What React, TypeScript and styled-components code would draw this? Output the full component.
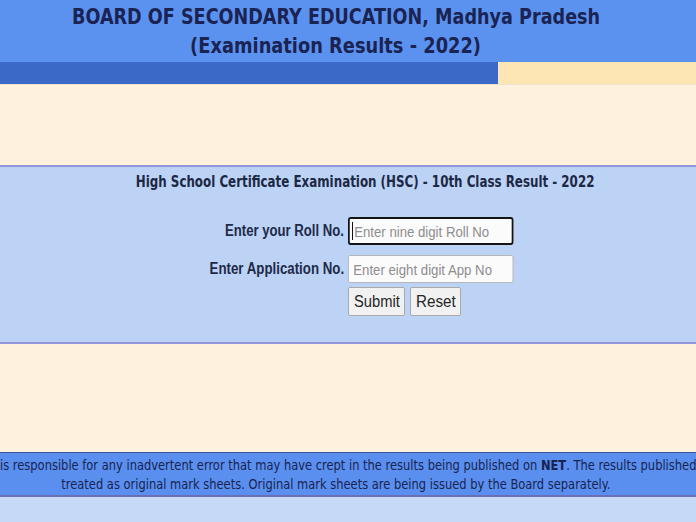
import React from "react";
import styled, { createGlobalStyle } from "styled-components";

const GlobalStyle = createGlobalStyle`
  html, body {
    margin: 0;
    padding: 0;
    background: #c6daf7;
  }
  * {
    box-sizing: border-box;
  }
`;

const Page = styled.div`
  width: 696px;
  height: 522px;
  overflow: hidden;
  display: flex;
  flex-direction: column;
  background: #c6daf7;
`;

// text on the page is squeezed sideways, as in the screenshot
const Squeeze = styled.span<{ $sx: number; $origin?: string }>`
  display: inline-block;
  white-space: nowrap;
  transform: scaleX(${(p) => p.$sx});
  transform-origin: ${(p) => p.$origin || "center"} center;
`;

const Header = styled.header`
  height: 62px;
  background: #5b92f0;
  padding-top: 2px;
  flex-shrink: 0;
  overflow: hidden;
`;

const HeaderTitle = styled.div`
  width: 672px;
  display: flex;
  flex-direction: column;
  align-items: center;
  font-family: "DejaVu Sans", Verdana, sans-serif;
  font-weight: bold;
  font-size: 22px;
  line-height: 29px;
  color: #1a2352;
`;

const Strip = styled.div`
  height: 23px;
  flex-shrink: 0;
  display: grid;
  grid-template-columns: 498px 1fr;
  border-bottom: 1px solid #f3e2c8;
`;

const StripPart = styled.div<{ $tone: string }>`
  background: ${(p) => p.$tone};
`;

const CreamBand = styled.div<{ $h: number }>`
  height: ${(p) => p.$h}px;
  background: #fef1dd;
  flex-shrink: 0;
`;

const Rule = styled.div`
  height: 2px;
  background: #9297dc;
  flex-shrink: 0;
`;

const FormSection = styled.section`
  height: 175px;
  background: #bcd3f6;
  padding-top: 5px;
  flex-shrink: 0;
`;

const SectionTitle = styled.h2`
  margin: 0;
  padding-left: 34px;
  display: flex;
  justify-content: center;
  font-family: "DejaVu Sans", Verdana, sans-serif;
  font-weight: bold;
  font-size: 16px;
  line-height: 20px;
  color: #1c2844;
`;

const FormGrid = styled.form`
  margin-top: 25px;
  display: grid;
  grid-template-columns: 344px 1fr;
  column-gap: 4px;
  row-gap: 4px;
  align-items: start;
`;

const Label = styled.label<{ $below?: number }>`
  text-align: right;
  margin-bottom: ${(p) => p.$below || 0}px;
  font-family: "Liberation Sans", Arial, sans-serif;
  font-weight: bold;
  font-size: 16px;
  line-height: 28px;
  color: #1e2a48;
`;

const InputWrap = styled.div<{ $below?: number }>`
  position: relative;
  height: 28px;
  margin-bottom: ${(p) => p.$below || 0}px;
`;

const TextInput = styled.input<{ $focused?: boolean }>`
  width: 188px;
  height: 28px;
  padding: 0 5px;
  transform: scaleX(0.88);
  transform-origin: left center;
  background: #fbfbfb;
  border: ${(p) => (p.$focused ? "2px solid #141414" : "1px solid #b3b3b3")};
  border-radius: ${(p) => (p.$focused ? "3px" : "2px")};
  font-family: "Liberation Sans", Arial, sans-serif;
  font-size: 15px;
  color: #222;
  outline: none;

  &::placeholder {
    color: #8d8d8d;
  }
`;

const Caret = styled.span`
  position: absolute;
  left: 4px;
  top: 5px;
  width: 1px;
  height: 18px;
  background: #111;
`;

const Buttons = styled.div`
  grid-column: 2;
  display: flex;
  gap: 5px;
`;

const Button = styled.button<{ $w: number }>`
  width: ${(p) => p.$w}px;
  height: 29px;
  padding: 0;
  background: #f1f1f1;
  border: 1px solid #a9a9a9;
  border-radius: 2px;
  font-family: "Liberation Sans", Arial, sans-serif;
  font-size: 16px;
  color: #262626;
`;

const Footer = styled.footer`
  height: 45px;
  flex-shrink: 0;
  padding-top: 3px;
  background: #5a8ff0;
  border-top: 1px solid #3f5596;
  border-bottom: 2px solid #6a6fb6;
  font-family: "DejaVu Sans", Verdana, sans-serif;
  font-size: 14px;
  line-height: 19px;
  color: #18234e;
  overflow: hidden;
`;

const NoticeLine = styled.div<{ $center?: boolean }>`
  width: ${(p) => (p.$center ? "672px" : "696px")};
  display: flex;
  justify-content: ${(p) => (p.$center ? "center" : "flex-start")};
  white-space: nowrap;
`;

export default function App() {
  return (
    <>
      <GlobalStyle />
      <Page>
        <Header>
          <HeaderTitle>
            <Squeeze $sx={0.8}>BOARD OF SECONDARY EDUCATION, Madhya Pradesh</Squeeze>
            <Squeeze $sx={0.81}>(Examination Results - 2022)</Squeeze>
          </HeaderTitle>
        </Header>
        <Strip>
          <StripPart $tone="#3a69c7" />
          <StripPart $tone="#fde6b4" />
        </Strip>
        <CreamBand $h={80} />
        <Rule />
        <FormSection>
          <SectionTitle>
            <Squeeze $sx={0.742}>
              High School Certificate Examination (HSC) - 10th Class Result - 2022
            </Squeeze>
          </SectionTitle>
          <FormGrid onSubmit={(e) => e.preventDefault()}>
            <Label htmlFor="roll" $below={6}>
              <Squeeze $sx={0.82} $origin="right">Enter your Roll No.</Squeeze>
            </Label>
            <InputWrap $below={6}>
              <TextInput id="roll" $focused placeholder="Enter nine digit Roll No" />
              <Caret />
            </InputWrap>
            <Label htmlFor="app">
              <Squeeze $sx={0.83} $origin="right">Enter Application No.</Squeeze>
            </Label>
            <InputWrap>
              <TextInput id="app" placeholder="Enter eight digit App No" />
            </InputWrap>
            <Buttons>
              <Button $w={57} type="submit">
                <Squeeze $sx={0.92}>Submit</Squeeze>
              </Button>
              <Button $w={51} type="reset">
                <Squeeze $sx={0.95}>Reset</Squeeze>
              </Button>
            </Buttons>
          </FormGrid>
        </FormSection>
        <Rule />
        <CreamBand $h={108} />
        <Footer>
          <NoticeLine>
            <Squeeze $sx={0.82} $origin="left">
              is responsible for any inadvertent error that may have crept in the results being
              published on <b>NET</b>. The results published
            </Squeeze>
          </NoticeLine>
          <NoticeLine $center>
            <Squeeze $sx={0.82}>
              treated as original mark sheets. Original mark sheets are being issued by the Board
              separately.
            </Squeeze>
          </NoticeLine>
        </Footer>
      </Page>
    </>
  );
}
